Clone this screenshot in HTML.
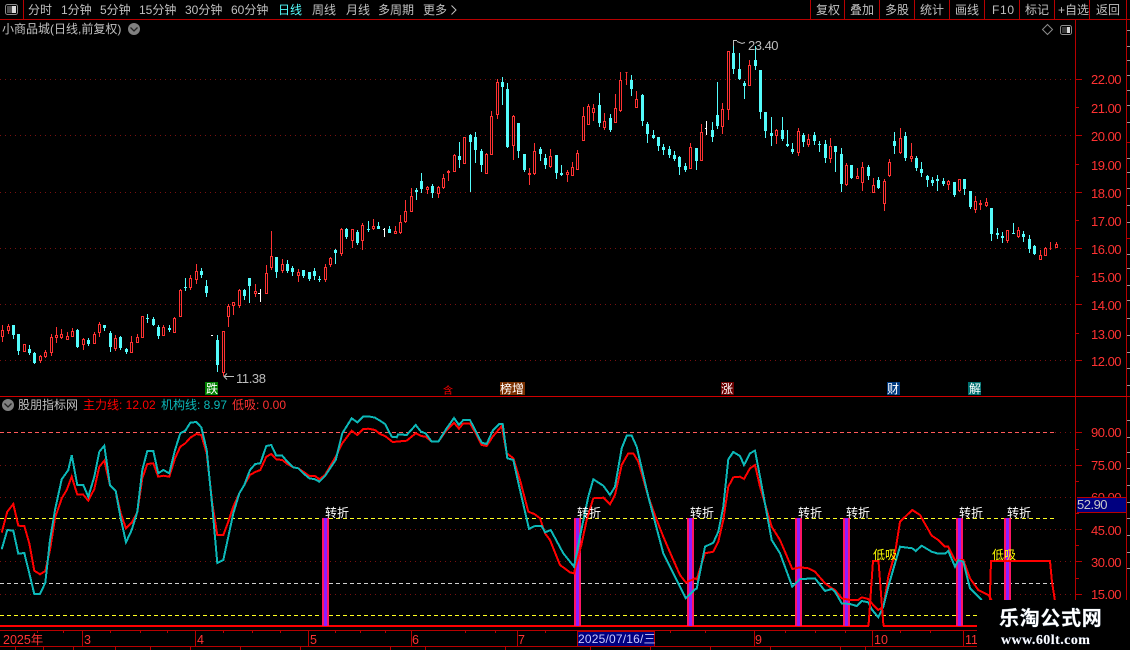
<!DOCTYPE html>
<html><head><meta charset="utf-8"><title>K线</title>
<style>
html,body{margin:0;padding:0;background:#000;width:1130px;height:650px;overflow:hidden}
svg{display:block;position:absolute;left:0;top:0}
text{font-family:"Liberation Sans","WenQuanYi Zen Hei","Noto Sans CJK SC",sans-serif;font-size:12px;fill:#c0c0c0}
.ax{fill:#ff3232;font-size:13px;letter-spacing:-.5px}
.d{fill:#ff3232;font-size:12.5px}
.z{fill:#fff;font-size:12px;letter-spacing:0}
.y{fill:#ff0;font-size:12px}
.t{fill:#fff;font-size:11px}
</style></head><body>
<svg width="1130" height="650" viewBox="0 0 1130 650">
<g stroke="#7a1010" stroke-width="1" stroke-dasharray="1 4" shape-rendering="crispEdges">
<path d="M0 79.5H1075M0 135.5H1075M0 192.5H1075M0 248.5H1075M0 304.5H1075M0 360.5H1075"/>
<path d="M0 465.5H1075M0 497.5H1075M0 529.5H1075M0 561.5H1075M0 594.5H1075M1055 432.5H1075"/>
</g>
<g id="candles" shape-rendering="crispEdges">
<path id="cw" stroke="#54fcfc" fill="none"/>
<path id="cb" fill="#54fcfc"/>
<path id="rw" stroke="#ff3232" fill="none"/>
<path id="wh" stroke="#fff" fill="none"/>
</g>
<g fill="none" stroke-width="1" shape-rendering="crispEdges" stroke-dasharray="4 3">
<path d="M0 432.5H1055" stroke="#ff5a5a"/>
<path d="M0 518.5H1055" stroke="#ffff20"/>
<path d="M0 583.5H1055" stroke="#d0d0d0"/>
<path d="M0 615.5H1055" stroke="#ffff20"/>
</g>
<rect x="0" y="625" width="869" height="2" fill="#f00"/>
<rect x="883" y="625" width="107" height="2" fill="#f00"/>
<g id="bars"></g>
<path id="lr" fill="none" stroke="#f00" stroke-width="2" shape-rendering="crispEdges"/>
<path id="lc" fill="none" stroke="#0cb8b8" stroke-width="2" shape-rendering="crispEdges"/>
<path d="M868.5 626L873 561H878.5L883.5 626M989 626L991 561H1050L1052 582L1055 601" fill="none" stroke="#f00" stroke-width="2" shape-rendering="crispEdges"/>

<g stroke="#b80000" stroke-width="1" shape-rendering="crispEdges" fill="none">
<path d="M0 19.5H1130M23.5 0V19M810.5 0V19M844.5 0V19M879.5 0V19M914.5 0V19M949.5 0V19M984.5 0V19M1019.5 0V19M1054.5 0V19M1089.5 0V19"/>
<path d="M1075.5 19V630M1126.5 0V650"/>
<path d="M0 396.5H1130" stroke="#d00000"/>
<path d="M0 630.5H977M0 646.5H977"/>
<path d="M82.5 631V646M195.5 631V646M308.5 631V646M411.5 631V646M517.5 631V646M754.5 631V646M872.5 631V646M963.5 631V646"/>
<path d="M37.5 630V633M63.5 630V633M110.5 630V633M140.5 630V633M167.5 630V633M223.5 630V633M252.5 630V633M280.5 630V633M335.5 630V633M360.5 630V633M385.5 630V633M465.5 630V633M495.5 630V633M545.5 630V633M610.5 630V633M670.5 630V633M705.5 630V633M785.5 630V633M815.5 630V633M845.5 630V633M900.5 630V633M930.5 630V633"/>
<path d="M15.5 647V650M43.5 647V650M73.5 647V650M115.5 647V650M150.5 647V650M190.5 647V650M240.5 647V650M300.5 647V650M390.5 647V650M425.5 647V650M505.5 647V650M590.5 647V650M650.5 647V650M710.5 647V650M770.5 647V650M840.5 647V650M865.5 647V650"/>
<path d="M1075 79.5H1082M1075 135.5H1082M1075 192.5H1082M1075 248.5H1082M1075 304.5H1082M1075 360.5H1082M1075 107.5H1079M1075 164.5H1079M1075 220.5H1079M1075 276.5H1079M1075 333.5H1079"/>
<path d="M1075 432.5H1082M1075 465.5H1082M1075 529.5H1082M1075 561.5H1082M1075 594.5H1082M1075 449.5H1079M1075 481.5H1079M1075 513.5H1079M1075 545.5H1079M1075 578.5H1079"/>
<path d="M1127 142.5H1130M1127 19.5H1130M1127 142.5H1130M1127 238.5H1130M1127 396.5H1130"/>
</g>
<path d="M1127 30.5H1130M1127 46.5H1130M1127 60.5H1130M1127 75.5H1130M1127 90.5H1130M1127 105.5H1130M1127 122.5H1130M1127 158.5H1130M1127 172.5H1130M1127 188.5H1130M1127 205.5H1130M1127 222.5H1130M1127 254.5H1130M1127 268.5H1130M1127 285.5H1130M1127 300.5H1130M1127 318.5H1130M1127 335.5H1130M1127 352.5H1130M1127 368.5H1130M1127 385.5H1130M1127 420.5H1130M1127 437.5H1130M1127 452.5H1130M1127 468.5H1130M1127 485.5H1130M1127 502.5H1130M1127 518.5H1130M1127 535.5H1130M1127 552.5H1130M1127 568.5H1130" stroke="#999" shape-rendering="crispEdges"/>

<!-- toolbar -->
<rect x="5.5" y="4.5" width="12" height="10" rx="2" fill="#000" stroke="#8c8c8c"/>
<rect x="7" y="6" width="5" height="7" fill="#505050"/><rect x="12" y="6" width="4" height="7" fill="#d8d8d8"/>
<text x="28" y="14">分时</text><text x="61" y="14">1分钟</text><text x="100" y="14">5分钟</text><text x="139" y="14">15分钟</text><text x="185" y="14">30分钟</text><text x="231" y="14">60分钟</text>
<text x="278" y="14" style="fill:#54fcfc">日线</text><text x="312" y="14">周线</text><text x="346" y="14">月线</text><text x="378" y="14">多周期</text><text x="423" y="14">更多</text>
<path d="M451.5 5.5L456 10L451.5 14.5" fill="none" stroke="#c0c0c0"/>
<text x="816" y="14">复权</text><text x="850" y="14">叠加</text><text x="885" y="14">多股</text><text x="920" y="14">统计</text><text x="955" y="14">画线</text><text x="992" y="14" style="letter-spacing:.7px">F10</text><text x="1025" y="14">标记</text><text x="1058" y="14">+自选</text><text x="1096" y="14">返回</text>

<!-- main header -->
<text x="2" y="33">小商品城(日线,前复权)</text>
<circle cx="134" cy="29" r="6" fill="#808080"/><path d="M130.5 27.5L134 31L137.5 27.5" fill="none" stroke="#222" stroke-width="1.3"/>
<path d="M1047.5 24.5L1052.5 29.5L1047.5 34.5L1042.5 29.5Z" fill="none" stroke="#8c8c8c"/>
<rect x="1060.5" y="25.5" width="11" height="9" rx="2" fill="#000" stroke="#8c8c8c"/><rect x="1062" y="27" width="5" height="6" fill="#383838"/><rect x="1067" y="27" width="3" height="6" fill="#d8d8d8"/>

<!-- axis labels -->
<text class="ax" x="1091" y="84">22.00</text><text class="ax" x="1091" y="113">21.00</text><text class="ax" x="1091" y="141">20.00</text><text class="ax" x="1091" y="170">19.00</text><text class="ax" x="1091" y="198">18.00</text><text class="ax" x="1091" y="226">17.00</text><text class="ax" x="1091" y="254">16.00</text><text class="ax" x="1091" y="282">15.00</text><text class="ax" x="1091" y="310">14.00</text><text class="ax" x="1091" y="339">13.00</text><text class="ax" x="1091" y="366">12.00</text>
<text class="ax" x="1091" y="437">90.00</text><text class="ax" x="1091" y="470">75.00</text><text class="ax" x="1091" y="502">60.00</text><text class="ax" x="1091" y="535">45.00</text><text class="ax" x="1091" y="567">30.00</text><text class="ax" x="1091" y="599">15.00</text>
<rect x="1077" y="497" width="49" height="16" fill="#000080"/><path d="M1077 497.5H1126M1077 512.5H1126" stroke="#b80000" shape-rendering="crispEdges"/>
<text x="1077" y="509" style="font-size:13px;fill:#c8c8c8;letter-spacing:-.5px">52.90</text>

<!-- price annotations -->
<path d="M234 376.5H224M227 373.5L224 376.5L227 379.5" fill="none" stroke="#bdbdbd"/>
<text x="236" y="383" style="font-size:13px;fill:#bdbdbd;letter-spacing:-.4px">11.38</text>
<path d="M733.5 40V46M733.5 40.5H737M737 41.5L742 43.5L745 42.5" fill="none" stroke="#bdbdbd"/>
<text x="748" y="50" style="font-size:13px;fill:#bdbdbd;letter-spacing:-.5px">23.40</text>

<!-- signal tags -->
<rect x="205" y="382" width="13" height="13" fill="#008000"/><text class="t" x="206" y="393" style="font-size:12px">跌</text>
<text x="443" y="394" style="fill:#f00;font-size:10px">含</text>
<rect x="500" y="382" width="25" height="13" fill="#7a3000"/><text class="t" x="500" y="393" style="font-size:12px">榜增</text>
<rect x="721" y="382" width="13" height="13" fill="#6a0000"/><text class="t" x="721" y="393" style="font-size:12px">涨</text>
<rect x="887" y="382" width="13" height="13" fill="#003a80"/><text class="t" x="887" y="393" style="font-size:12px">财</text>
<rect x="968" y="382" width="13" height="13" fill="#007070"/><text class="t" x="969" y="393" style="font-size:12px">解</text>

<!-- indicator header -->
<circle cx="8" cy="405" r="6" fill="#808080"/><path d="M4.5 403.5L8 407L11.5 403.5" fill="none" stroke="#222" stroke-width="1.3"/>
<text x="18" y="409">股朋指标网</text>
<text x="83" y="409" style="fill:#f00">主力线: 12.02</text>
<text x="161" y="409" style="fill:#0cb8b8">机构线: 8.97</text>
<text x="232" y="409" style="fill:#ff3232">低吸: 0.00</text>

<!-- signals text -->
<text class="z" x="325" y="517">转折</text><text class="z" x="577" y="517">转折</text><text class="z" x="690" y="517">转折</text><text class="z" x="798" y="517">转折</text><text class="z" x="846" y="517">转折</text><text class="z" x="959" y="517">转折</text><text class="z" x="1007" y="517">转折</text>
<text class="y" x="873" y="559">低吸</text><text class="y" x="992" y="559">低吸</text>

<!-- date bar -->
<text class="d" x="3" y="644">2025年</text><text class="d" x="84" y="644">3</text><text class="d" x="197" y="644">4</text><text class="d" x="310" y="644">5</text><text class="d" x="412" y="644">6</text><text class="d" x="518" y="644">7</text><text class="d" x="755" y="644">9</text><text class="d" x="874" y="644">10</text><text class="d" x="965" y="644">11</text>
<rect x="577.5" y="631.5" width="77" height="15" fill="#000080" stroke="#b80000" shape-rendering="crispEdges"/>
<text x="578" y="643" style="font-size:12px;fill:#c8c8ff;letter-spacing:.2px">2025/07/16/三</text>

<!-- watermark -->
<rect x="977" y="600" width="153" height="50" fill="#000"/>
<text x="999" y="625" style="font-size:20px;font-weight:bold;fill:#fff;letter-spacing:.7px;font-family:'Noto Sans CJK SC',sans-serif;paint-order:stroke;stroke:#456;stroke-width:.6">乐淘公式网</text>
<text x="1001" y="644" style="font-size:14px;font-weight:bold;fill:#fff;letter-spacing:.45px;font-family:'Liberation Serif',serif;paint-order:stroke;stroke:#346;stroke-width:.5">www.60lt.com</text>
</svg>
<script>
var C=[
[0,230,"r7 285 300 320 335;r25 283 288 303 312;c40 285 286 315 327;c55 312 312 362 375;r73 343 343 366 366;c88 345 357 370 375;c103 366 369 400 402;r121 375 378 393 400;r136 360 366 381 385;r154 312 321 369 378;r169 291 315 324 339;r184 297 312 324 328;r202 306 318 330 330;r217 294 303 321 321;c232 297 300 351 354;r250 324 327 345 360;c265 324 330 342 348;r283 306 312 342 342;r298 276 282 309 321;c313 285 285 294 303;c331 303 309 351 366;r346 315 324 357 363;c361 318 321 354 360;c379 354 357 366 372;r394 318 336 369 369;r412 312 321 339 339;r427 258 258 324 324;c442 252 264 267 279;c460 261 267 285 288;c475 285 291 318 327;r490 285 291 318 318;c508 285 294 300 306;r523 261 264 309 309;r541 177 180 261 261;c556 144 171 174 183;r571 135 144 174 180;r589 102 123 150 162;c604 114 123 135 144;c619 150 168 189 201;c652 315 330 405 426;r670 303 303 429 438;r685 222 228 261 290;r700 215 216 228 255;r718 177 180 228 234;c733 177 180 198 210;c748 144 144 168 219;r766 162 183 192 201;r799 105 129 192 192;r814 3 78 114 120;c829 81 81 126 144"],
[272,200,"r31 177 192 213 219;c46 180 192 213 219;c61 198 204 216 228;r79 207 216 228 246;c94 210 210 228 234;c112 216 216 237 243;c127 204 213 228 240;c142 228 237 240 246;r160 192 201 240 246;r175 171 174 195 201;c190 147 150 159 192;r208 84 87 162 168;c223 84 87 111 117;r241 87 87 123 144;c256 90 96 129 135;r271 69 75 123 150;c289 63 87 90 96;r304 57 78 87 90;c319 66 78 87 87;c352 78 87 99 99;r370 78 93 102 102;r385 45 66 99 102"],
[280,60,"r376 420 453 486 489;r394 384 408 456 456;c409 384 390 396 420;c424 339 363 387 399;r442 378 381 390 402;c457 372 378 399 414;r475 378 381 402 414;r490 342 354 384 387;r505 330 333 339 363;r523 282 285 336 336;c538 246 288 300 324;r553 231 231 312 312;c571 222 225 246 396;c586 216 231 270 309;c604 267 273 315 336;r619 279 282 342 342;r634 153 168 285 285;r652 57 66 165 177;c667 51 66 81 135;c682 69 87 261 264;r700 165 168 258 300;c715 189 189 273 294;c733 282 282 330 336;r748 324 339 345 375;r763 249 273 342 345;c781 261 267 282 303;c796 282 294 315 327;r811 267 288 321 324;c829 285 285 339 357"],
[560,30,"c3 405 429 435 438;r22 420 426 435 456;r37 396 411 438 438;r52 360 369 420 420;r70 231 258 333 333;r85 222 228 285 285;r100 222 234 249 273;c118 189 225 279 291;r133 249 273 294 300;c151 252 264 300 306;r166 192 234 279 279;r181 126 150 243 246;r199 126 126 127 165;c214 135 150 177 198;r229 183 207 234 234;c247 192 195 273 288;c262 276 282 312 339;c280 300 315 324 327;c295 321 321 348 363;c310 342 351 360 375;c328 348 357 375 384;c343 363 375 387 393;c358 378 381 411 435;c376 399 408 420 426;r391 339 351 417 417;c409 354 354 393 420;r424 282 306 393 393;c457 276 300 321 336;c472 156 255 288 297;r487 219 237 291 312;r505 63 63 240 270;c520 30 69 117 132;c538 69 117 147 150;c553 153 159 168 207;r568 90 105 168 168;c586 48 90 108 120;c601 120 120 246 267;c616 246 246 303 324;c634 261 309 318 348;r649 297 300 318 342;c667 261 300 327 333;c682 300 342 348 351;c697 339 357 366 372;r715 294 303 369 378;c730 309 315 336 351;r745 312 327 345 351;c763 306 315 333 345;c778 333 342 345 366;c796 330 342 384 399;r811 324 348 387 399;c826 348 348 366 426"],
[830,110,"c34 114 132 222 246;r49 159 165 225 228;c64 165 165 204 207;r82 174 198 207 207;r97 156 171 219 243;c115 165 171 198 210;r130 204 225 249 249;c145 201 210 234 237;r163 207 213 282 303;r178 147 156 198 201;c193 66 93 108 132;r211 54 84 129 132;c226 66 78 144 153;r244 99 138 147 156;c259 138 144 174 183;c274 156 177 189 201;c292 195 198 210 231;c307 201 210 219 228;c322 195 207 213 243;c340 204 213 222 228;r355 210 213 225 240;c373 216 216 255 261;r388 207 207 243 246;c403 207 207 237 255;c421 243 243 291 297;r436 258 273 300 309;r451 270 279 285 300;r469 264 276 288 291;c484 294 294 372 393;c502 354 369 375 387;c517 366 378 384 399;r532 360 360 393 399;c550 339 369 372 372;r565 351 360 381 384;c580 363 372 381 396;c598 375 387 417 429;c613 405 408 432 435;r631 420 435 450 450;r646 411 414 438 438;r661 396 414 417 420;r679 396 402 414 414"]
];
var cw="",cb="",rw="";
C.forEach(function(g){
 g[2].split(";").forEach(function(s){
  var t=s[0],a=s.slice(1).split(" ").map(Number);
  var X=Math.floor(g[0]+a[0]/3),wt=Math.round(g[1]+a[1]/3),bt=Math.round(g[1]+a[2]/3),bb=Math.round(g[1]+a[3]/3),wb=Math.round(g[1]+a[4]/3);
  if(bb<=bt)bb=bt+1;
  if(t=="c"){
   cw+="M"+(X+.5)+" "+wt+"V"+wb;
   cb+="M"+(X-1)+" "+bt+"h3V"+bb+"h-3z";
  }else{
   rw+="M"+(X+.5)+" "+wt+"V"+bt+"M"+(X+.5)+" "+bb+"V"+wb;
   rw+="M"+(X-.5)+" "+(bt+.5)+"h2V"+(bb-.5)+"h-2z";
  }
 });
});
document.getElementById("cw").setAttribute("d",cw);
document.getElementById("cb").setAttribute("d",cb);
document.getElementById("rw").setAttribute("d",rw);
document.getElementById("wh").setAttribute("d","M211 335.5H213M260.5 289V302M258 293.5H260M384.5 228V237M383 229.5H384M706.5 121V135M705 128.5H706");
function P(ox,oy,a){var r=[];for(var i=0;i<a.length;i+=2)r.push((ox+a[i]/3).toFixed(1)+" "+(oy+a[i+1]/3).toFixed(1));return r;}
var R=P(0,390,[5,428,22,365,40,342,55,407,73,408,88,460,103,542,120,553,136,543,150,480,165,385,185,325,200,300,215,260,232,314,250,314,265,332,283,297,298,230,313,212,330,286,347,303,362,370,378,415,395,398,412,367,427,265,442,222,460,220,475,260,490,257,508,260,525,205,541,170,556,160,571,143,589,132,604,135,620,190,637,340,652,435,670,435,685,395,700,350,718,310,733,285,750,255,766,246,781,240,799,200,814,192,829,208,847,210,862,222,880,232,895,235,910,245,928,258,945,258,958,268,975,255,1007,200,1027,160,1055,122,1072,135,1090,117,1105,116,1125,120,1140,132])
.concat(P(380,390,[15,138,38,156,80,152,107,130,123,138,137,140,155,155,175,155,200,120,222,98,237,116,250,100,270,100,290,135,305,165,320,168,338,140,365,108,380,190,400,205,420,270,445,365,463,372,480,385,495,430,510,450,540,525,570,547,582,550,604,465,620,390,640,325,670,323,690,343,705,315,725,225,745,190,760,190,775,215,805,320,830,390,850,440,880,510,900,555,918,578,945,565,950,568,975,490,1000,485,1015,455,1030,390,1045,290,1060,262,1080,260,1092,267,1110,235]))
.concat(P(750,390,[15,225,30,290,65,410,90,450,127,537,150,532,175,535,195,545,225,580,245,595,255,600,275,625,300,630,325,630,335,622,355,627,370,645,385,660,400,650,415,560,435,490,450,395,487,360,510,375,545,437,565,450,585,470,595,470,615,510,640,510,660,565,685,600,715,615,725,630]));
var K=P(0,390,[5,478,22,420,40,422,55,491,73,489,88,550,103,612,120,612,136,578,150,450,165,360,185,268,205,240,215,195,232,285,250,285,265,320,283,260,298,185,313,167,330,286,347,303,362,385,378,457,395,420,412,365,427,240,442,183,460,183,475,250,490,240,508,250,525,180,541,130,556,122,571,98,589,96,604,112,620,180,637,350,652,519,670,510,685,440,700,370,718,310,733,285,750,240,766,222,781,220,799,168,814,165,829,197,847,197,862,215,880,232,895,235,910,250,928,265,945,268,958,275,975,258,1007,210,1027,130,1055,85,1072,97,1090,79,1105,79,1125,83,1140,92])
.concat(P(380,390,[15,102,35,140,50,142,55,133,80,135,107,105,123,125,137,130,155,155,175,155,200,115,222,84,237,105,250,90,270,90,290,130,305,158,320,162,338,122,358,102,368,102,382,205,400,210,420,300,447,417,465,408,485,408,495,427,512,420,550,490,582,530,604,420,625,320,640,268,670,287,690,315,705,290,725,175,740,137,755,137,770,170,805,320,850,490,890,570,917,625,945,598,950,596,975,470,1000,458,1015,425,1030,350,1045,208,1060,186,1080,198,1092,225,1110,190]))
.concat(P(750,390,[15,182,30,260,65,450,90,490,127,590,150,567,175,566,195,565,225,603,245,597,255,605,275,640,300,642,320,648,335,633,355,637,365,658,385,682,400,650,415,590,435,520,450,470,487,475,497,483,515,467,545,485,565,491,585,491,595,483,615,530,625,510,640,515,660,595,695,630]));
document.getElementById("lr").setAttribute("d","M"+R.join("L"));
document.getElementById("lc").setAttribute("d","M"+K.join("L"));
var h="";[322,574,687,795,843,956,1004].forEach(function(x){
 h+='<rect x="'+x+'" y="518" width="7" height="108" fill="#ff1464" shape-rendering="crispEdges"/><rect x="'+(x+2)+'" y="518" width="3" height="108" fill="#8c1eff" shape-rendering="crispEdges"/>';
});
document.getElementById("bars").innerHTML=h;
</script>
</body></html>
